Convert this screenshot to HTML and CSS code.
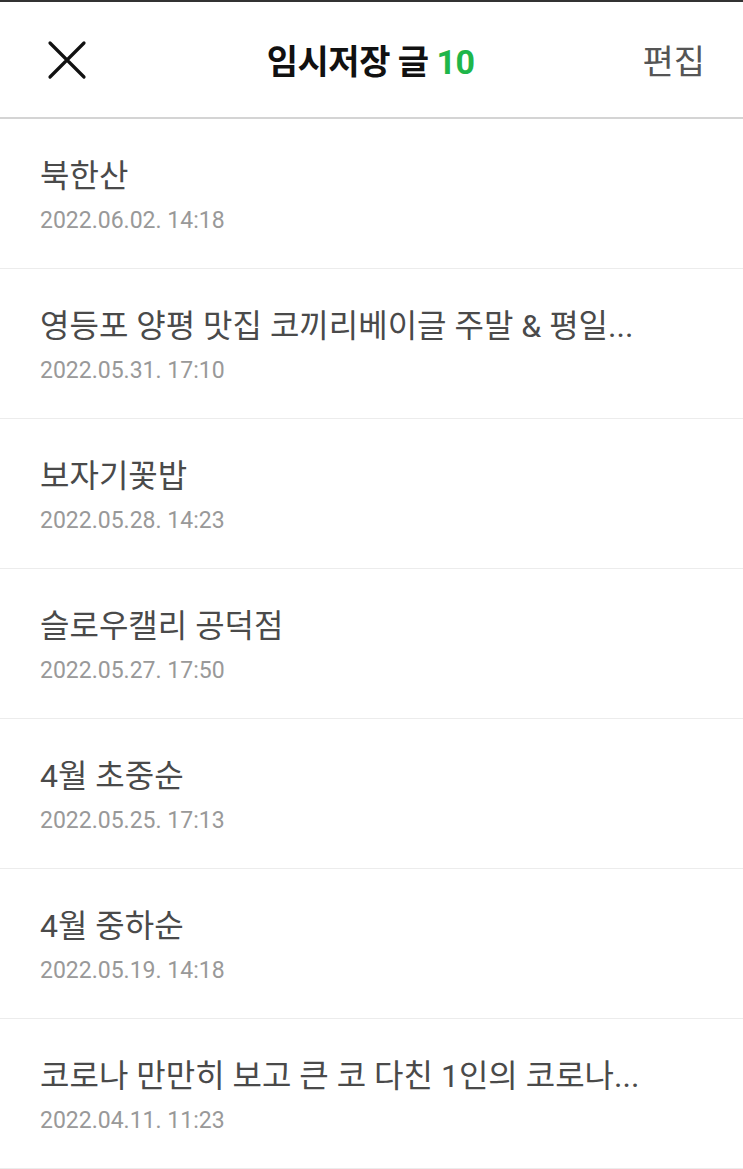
FILE: index.html
```html
<!DOCTYPE html>
<html lang="ko">
<head>
    <meta charset="UTF-8">
    <meta name="viewport" content="width=device-width, initial-scale=1.0">
    <title>임시저장 글</title>
    <link rel="stylesheet" href="styles.css">
</head>
<body>
    <header class="top-bar">
        <button class="close-btn" aria-label="닫기">
            <svg width="40" height="40" viewBox="0 0 40 40">
                <path d="M3 3 L37 37 M37 3 L3 37" stroke="#111" stroke-width="3.2" stroke-linecap="round" fill="none"/>
            </svg>
        </button>
        <h1 class="title">임시저장 글 <span class="count">10</span></h1>
        <button class="edit-btn">편집</button>
    </header>

    <ul class="draft-list">
        <li class="draft">
            <div class="draft-title">북한산</div>
            <div class="draft-date">2022.06.02. 14:18</div>
        </li>
        <li class="draft">
            <div class="draft-title">영등포 양평 맛집 코끼리베이글 주말 &amp; 평일...</div>
            <div class="draft-date">2022.05.31. 17:10</div>
        </li>
        <li class="draft">
            <div class="draft-title">보자기꽃밥</div>
            <div class="draft-date">2022.05.28. 14:23</div>
        </li>
        <li class="draft">
            <div class="draft-title">슬로우캘리 공덕점</div>
            <div class="draft-date">2022.05.27. 17:50</div>
        </li>
        <li class="draft">
            <div class="draft-title">4월 초중순</div>
            <div class="draft-date">2022.05.25. 17:13</div>
        </li>
        <li class="draft">
            <div class="draft-title">4월 중하순</div>
            <div class="draft-date">2022.05.19. 14:18</div>
        </li>
        <li class="draft">
            <div class="draft-title">코로나 만만히 보고 큰 코 다친 1인의 코로나...</div>
            <div class="draft-date">2022.04.11. 11:23</div>
        </li>
    </ul>
</body>
</html>
```

FILE: styles.css
```css
body {
    margin: 0;
    font-family: Roboto, "Noto Sans CJK KR", sans-serif;
    background-color: #fff;
    color: #444;
    border-top: 2px solid #333;
}

/* 상단 바 */
.top-bar {
    height: 115px;
    display: flex;
    align-items: center;
    justify-content: space-between;
    padding: 0 38px 0 47px;
    border-bottom: 2px solid #d4d4d4;
}
.close-btn,
.edit-btn {
    background: none;
    border: none;
    padding: 0;
    cursor: pointer;
    font-family: inherit;
}
.close-btn svg {
    display: block;
}
.title {
    margin: 0 0 0 12px;
    font-size: 34px;
    font-weight: 700;
    color: #111;
    letter-spacing: -0.5px;
}
.title .count {
    color: #1fb64a;
}
.edit-btn {
    font-size: 34px;
    color: #555;
}

/* 목록 */
.draft-list {
    list-style: none;
    margin: 0;
    padding: 0;
}
.draft {
    height: 150px;
    box-sizing: border-box;
    padding: 38px 40px 0;
    border-bottom: 1px solid #ececec;
}
.draft-title {
    font-size: 32px;
    line-height: 38px;
    color: #4a4a4a;
    white-space: nowrap;
    overflow: hidden;
}
.draft-date {
    margin-top: 13px;
    font-size: 23px;
    line-height: 26px;
    color: #999;
}
```
